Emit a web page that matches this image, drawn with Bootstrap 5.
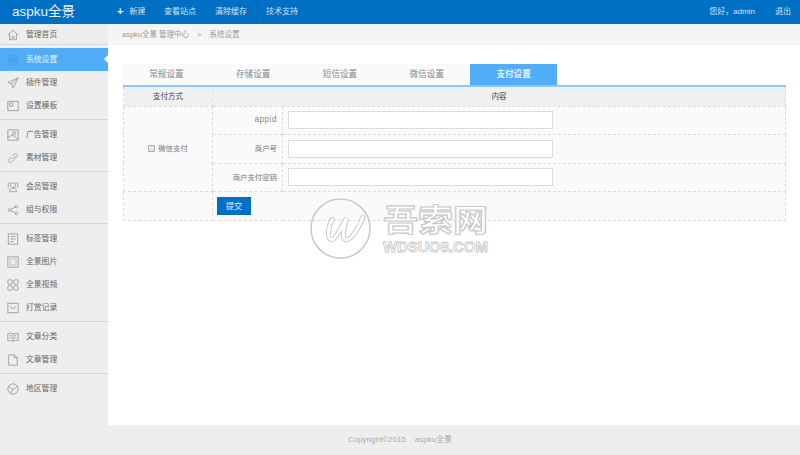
<!DOCTYPE html>
<html lang="zh-CN">
<head>
<meta charset="utf-8">
<title>aspku全景</title>
<link rel="stylesheet" href="https://cdn.jsdelivr.net/npm/bootstrap@5.3.0/dist/css/bootstrap.min.css">
<style>
html,body{height:455px;overflow:hidden}
body{font-family:"Liberation Sans","Noto Sans CJK SC",sans-serif;font-size:8px;color:#555;background:#fff}
.top-bar{height:24px;background:#0070c4;color:#dbe9f5;padding:0;flex-wrap:nowrap}
.brand-box{width:108px;height:24px;padding-left:12px;font-size:13.5px;line-height:24px;color:#e8f3fb;border-right:1px solid #0a66ae}
.top-links{gap:0;height:24px}
.top-links a{display:block;height:24px;line-height:23px;color:#cfe2f2;text-decoration:none;font-size:8px;border-right:1px solid #0a68b3}
.top-links a:first-child{width:47px;padding-left:9px}
.top-links a:nth-child(n+2){width:51px;text-align:center;padding:0}
.plus-mark{font-weight:700;font-size:11px;color:#e8f3fb;margin-right:6px;vertical-align:-1px}
.top-user{font-size:8px;color:#cfe2f2;padding-right:9px;gap:20px;line-height:24px}
.shell{height:401px}
.side-col{width:108px;flex:none;background:#eee;height:401px}
.side-group{padding:3px 0 2px;border-bottom:1px solid #d6d6d6}
.side-group:first-child{padding:0;height:21px}
.side-link{height:23px;display:flex;align-items:center;gap:7px;padding-left:7px;color:#666;font-size:7.8px;text-decoration:none;position:relative;white-space:nowrap}
.side-group:first-child .side-link{height:21px}
.side-link svg{width:12px;height:12px;flex:none;fill:none;stroke:#999;stroke-width:1}
.side-link.is-on{background:#52adf7;color:#e6f3fe}
.side-link.is-on svg{stroke:#3a8bd2}
.side-link.is-on::after{content:"";position:absolute;right:0;top:7px;border:4.5px solid transparent;border-right-color:#fff;border-left:0}
.main-col{min-width:0;height:401px}
.crumb-bar{height:21px;background:#f5f5f5;padding-left:14px;color:#999;font-size:7.5px;line-height:21px;gap:8px}
.page-body{padding:19px 14px 0 15px;position:relative}
.tab-row{height:21px;border:0;flex-wrap:nowrap}
.tab-row .nav-link{width:86.8px;height:21px;padding:0;line-height:21px;text-align:center;color:#888;background:#fafafa;border:0;border-radius:0;font-size:8.6px}
.tab-row .nav-link.active{background:#52adf7;color:#e9f5fe;font-weight:700}
.pay-table{width:663px;margin:0;border-top:2px solid #8cc9f8;border-collapse:collapse;table-layout:fixed;font-size:7.4px;color:#777}
.pay-table th,.pay-table td{border:1px dashed #dcdcdc;padding:0;vertical-align:middle;background:transparent}
.pay-table th{height:20px;background:#f0f0f0;text-align:center;font-weight:400;color:#444;font-size:7.6px}
.pay-table .data-row td{height:28.5px;background:#fafafa}
.pay-table .label-cell{text-align:right;padding-right:5px}
.pay-table .label-latin{font-size:8.2px;letter-spacing:.5px;color:#888}
.pay-table .field-cell{padding-left:5px}
.field-cell input{width:265px;height:18px;min-height:0;padding:0 4px;font-size:8px;border:1px solid #dcdcdc;border-radius:0;background:#fff}
.pay-check{appearance:none;-webkit-appearance:none;display:inline-block;width:7px;height:7px;margin:0 3px 0 0;vertical-align:-1px;border:1px solid #aaa;border-radius:1px;background:#e8e8e8}
.pay-table .send-row td{height:29px;background:#fafafa}
.send-btn{width:34px;height:18px;padding:0;margin-left:4px;border-radius:0;font-size:8.4px;line-height:18px;background:#0070c4;border:0;color:#e3f0fa;display:block}
.foot-bar{height:30px;background:#eee;color:#aaa;font-size:8px;line-height:30px;text-align:center}
.mark-wrap{position:absolute;left:202px;top:153px;gap:12px;align-items:center;pointer-events:none}
.mark-ring{width:61px;height:61px;flex:none}
.mark-words{color:#fff;font-family:"Noto Sans CJK SC","Liberation Sans",sans-serif;font-weight:700;text-align:center}
.mark-cn{font-size:31px;line-height:33px;color:#fff;-webkit-text-stroke:1.200px #c9c9c9;transform:scaleX(1.13);margin-top:-2px}
.mark-en{font-size:15px;line-height:15px;margin-top:5px;color:#fff;-webkit-text-stroke:.8px #c4c4c4;font-family:"Liberation Sans",sans-serif}
</style>
</head>
<body>
<nav class="navbar top-bar d-flex justify-content-between align-items-start">
  <div class="d-flex">
    <div class="brand-box">aspku全景</div>
    <div class="top-links d-flex">
      <a href="#"><span class="plus-mark">+</span>新建</a>
      <a href="#">查看站点</a>
      <a href="#">清除缓存</a>
      <a href="#">技术支持</a>
    </div>
  </div>
  <div class="top-user d-flex"><span>您好，admin</span><span>退出</span></div>
</nav>
<div class="shell d-flex">
  <aside class="side-col">
    <div class="side-group">
      <a class="side-link" href="#"><svg viewBox="0 0 14 14"><path d="M1 7 7 1.500 13 7M3 6v6.500h3V9h2v3.500h3V6"/></svg>管理首页</a>
    </div>
    <div class="side-group">
      <a class="side-link is-on" href="#"><svg viewBox="0 0 14 14"><circle cx="7" cy="7" r="5.500" stroke-dasharray="2 .8"/><circle cx="7" cy="7" r="2.500"/></svg>系统设置</a>
      <a class="side-link" href="#"><svg viewBox="0 0 14 14"><path d="M13 1 1 6.500l4.500 1.500 1.500 5zM5.500 8 13 1"/></svg>插件管理</a>
      <a class="side-link" href="#"><svg viewBox="0 0 14 14"><rect x="1" y="1.500" width="12" height="11"/><path d="M3 3.500h4v3.500H3z"/></svg>设置模板</a>
    </div>
    <div class="side-group">
      <a class="side-link" href="#"><svg viewBox="0 0 14 14"><rect x="1" y="1" width="12" height="12"/><circle cx="8.500" cy="5" r="1.800"/><path d="M1 10 6 7l7 5"/></svg>广告管理</a>
      <a class="side-link" href="#"><svg viewBox="0 0 14 14"><path d="M6 8.500 9.500 5M5 6 2.500 8.500a2 2 0 0 0 3 3L8 9M6 5l2.500-2.500a2 2 0 0 1 3 3L9 8"/></svg>素材管理</a>
    </div>
    <div class="side-group">
      <a class="side-link" href="#"><svg viewBox="0 0 14 14"><circle cx="7" cy="5" r="3"/><path d="M3 12.500c0-3 1.500-4.500 4-4.500s4 1.500 4 4.500zM4 2.500H1.500V8M10 2.500h2.500V8"/></svg>会员管理</a>
      <a class="side-link" href="#"><svg viewBox="0 0 14 14"><circle cx="3" cy="7" r="1.600"/><circle cx="11" cy="3" r="1.600"/><circle cx="11" cy="11" r="1.600"/><path d="m4.500 6.300 5-2.600M4.500 7.700l5 2.600"/></svg>组与权限</a>
    </div>
    <div class="side-group">
      <a class="side-link" href="#"><svg viewBox="0 0 14 14"><rect x="1.500" y="1" width="11" height="12"/><path d="M4 4h6M4 7h6M4 10h3.500"/></svg>标签管理</a>
      <a class="side-link" href="#"><svg viewBox="0 0 14 14"><rect x="1" y="1" width="12" height="12"/><rect x="3.500" y="3.500" width="7" height="7" stroke-dasharray="1.500 1"/></svg>全景图片</a>
      <a class="side-link" href="#"><svg viewBox="0 0 14 14"><rect x="1" y="1" width="5" height="5" rx="1"/><rect x="8" y="1" width="5" height="5" rx="1"/><rect x="1" y="8" width="5" height="5" rx="1"/><rect x="8" y="8" width="5" height="5" rx="1"/></svg>全景视频</a>
      <a class="side-link" href="#"><svg viewBox="0 0 14 14"><rect x="1" y="1.500" width="12" height="11"/><path d="M3.500 5 7 8l3.500-3"/></svg>打赏记录</a>
    </div>
    <div class="side-group">
      <a class="side-link" href="#"><svg viewBox="0 0 14 14"><path d="M7 3.500C5.500 2.500 3.500 2.500 1 3v8.500c2.500-.5 4.500-.5 6 .5 1.500-1 3.500-1 6-.5V3c-2.500-.5-4.500-.5-6 .5zM7 3.500V12M3 5.500h2.500M3 8h2.500M8.500 5.500H11M8.500 8H11"/></svg>文章分类</a>
      <a class="side-link" href="#"><svg viewBox="0 0 14 14"><path d="M2 1h6.500L12 4.500V13H2zM8.500 1v3.500H12"/></svg>文章管理</a>
    </div>
    <div class="side-group border-0">
      <a class="side-link" href="#"><svg viewBox="0 0 14 14"><circle cx="7" cy="7" r="6"/><path d="M2.500 3.500C4 6.500 5.500 7 7 7s3-.5 4.500-3.500M7 7 4 12.500"/></svg>地区管理</a>
    </div>
  </aside>
  <main class="main-col flex-grow-1 d-flex flex-column">
    <div class="crumb-bar d-flex"><span>aspku全景 管理中心</span><span>&gt;</span><span>系统设置</span></div>
    <div class="page-body flex-grow-1">
      <ul class="nav tab-row">
        <li class="nav-item"><a class="nav-link" href="#">常规设置</a></li>
        <li class="nav-item"><a class="nav-link" href="#">存储设置</a></li>
        <li class="nav-item"><a class="nav-link" href="#">短信设置</a></li>
        <li class="nav-item"><a class="nav-link" href="#">微信设置</a></li>
        <li class="nav-item"><a class="nav-link active" href="#">支付设置</a></li>
      </ul>
      <table class="table pay-table">
        <colgroup><col style="width:89px"><col style="width:70px"><col></colgroup>
        <thead><tr><th>支付方式</th><th colspan="2">内容</th></tr></thead>
        <tbody>
          <tr class="data-row"><td rowspan="3" class="text-center"><input type="checkbox" class="pay-check">微信支付</td><td class="label-cell label-latin">appid</td><td class="field-cell"><input class="form-control" type="text"></td></tr>
          <tr class="data-row"><td class="label-cell">商户号</td><td class="field-cell"><input class="form-control" type="text"></td></tr>
          <tr class="data-row"><td class="label-cell">商户支付密钥</td><td class="field-cell"><input class="form-control" type="text"></td></tr>
          <tr class="send-row"><td></td><td colspan="2"><button class="btn btn-primary send-btn" type="button">提交</button></td></tr>
        </tbody>
      </table>
      <div class="mark-wrap d-flex">
        <svg class="mark-ring" viewBox="0 0 60 60" fill="none" stroke="#c9c9c9"><circle cx="30" cy="30" r="29" stroke-width="1.500"/><path d="M22 21C17 30 17 40 21 41 25 42 32 26 36 20 33 30 31 40 35 41 40 42 48 30 52 19" stroke-width="5" stroke-linecap="round"/><path d="M22 21C17 30 17 40 21 41 25 42 32 26 36 20 33 30 31 40 35 41 40 42 48 30 52 19" stroke="#fff" stroke-width="3" stroke-linecap="round"/></svg>
        <div class="mark-words"><div class="mark-cn">吾索网</div><div class="mark-en">WDSUO8.COM</div></div>
      </div>
    </div>
  </main>
</div>
<footer class="foot-bar">Copyright©2015 &nbsp; &nbsp;aspku全景</footer>
<script src="https://cdn.jsdelivr.net/npm/bootstrap@5.3.0/dist/js/bootstrap.bundle.min.js"></script>
</body>
</html>
